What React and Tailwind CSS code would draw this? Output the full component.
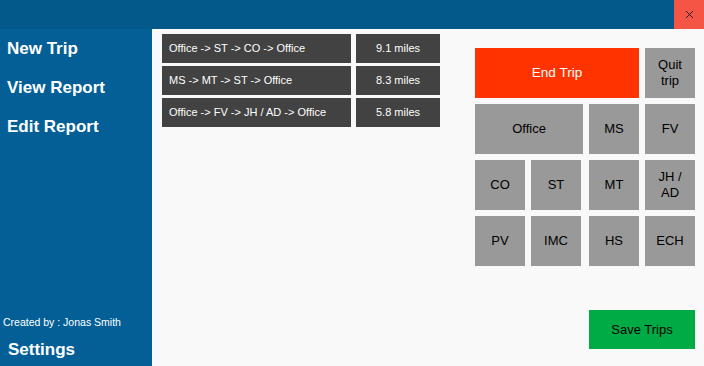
import React from "react";

const ROUTES = [
  { path: "Office -> ST -> CO -> Office", miles: "9.1 miles" },
  { path: "MS -> MT -> ST -> Office", miles: "8.3 miles" },
  { path: "Office -> FV -> JH / AD -> Office", miles: "5.8 miles" },
];

const GrayBtn = ({ children, className = "w-[50px]" }) => (
  <button
    className={`${className} h-[50px] bg-[#999999] text-black text-[13px] leading-[16px] flex items-center justify-center text-center`}
  >
    {children}
  </button>
);

const App = () => {
  return (
    <div
      className="w-[704px] h-[366px] flex flex-col bg-[#f9f9f9] overflow-hidden"
      style={{ fontFamily: '"Liberation Sans", Arial, sans-serif' }}
    >
      {/* title bar */}
      <div className="h-[29px] bg-[#04598b] flex justify-end shrink-0">
        <button className="w-[30px] h-[29px] bg-[#f55545] flex items-center justify-center">
          <svg width="9" height="9" viewBox="0 0 9 9">
            <path d="M1 1 L8 8 M8 1 L1 8" stroke="#222" strokeWidth="1" />
          </svg>
        </button>
      </div>

      <div className="flex flex-1 min-h-0">
        {/* sidebar */}
        <div className="w-[152px] bg-[#045f97] flex flex-col text-white shrink-0">
          {["New Trip", "View Report", "Edit Report"].map((item) => (
            <div
              key={item}
              className="h-[39px] flex items-center pl-[7px] text-[17px] font-bold"
            >
              {item}
            </div>
          ))}
          <div className="mt-auto mb-[4px] pl-[3px] text-[10.5px] leading-[13px]">
            Created by : Jonas Smith
          </div>
          <div className="h-[33px] flex items-center pl-[8px] text-[17px] font-bold">
            Settings
          </div>
        </div>

        {/* main */}
        <div className="flex-1 flex pl-[10px] pr-[9px] pt-[5px]">
          {/* routes */}
          <div className="flex flex-col gap-[3px] w-[278px]">
            {ROUTES.map((r) => (
              <div key={r.path} className="flex gap-[5px] h-[29px]">
                <div className="w-[189px] bg-[#424242] text-white text-[11px] flex items-center pl-[7px]">
                  {r.path}
                </div>
                <div className="w-[84px] bg-[#424242] text-white text-[11px] flex items-center justify-center">
                  {r.miles}
                </div>
              </div>
            ))}
          </div>

          {/* buttons */}
          <div className="ml-auto w-[220px] flex flex-col pt-[14px]">
            <div className="flex flex-col gap-[6px]">
              <div className="flex gap-[6px]">
                <button className="w-[164px] h-[50px] bg-[#ff3300] text-white text-[13.5px]">
                  End Trip
                </button>
                <GrayBtn>
                  Quit
                  <br />
                  trip
                </GrayBtn>
              </div>
              <div className="flex gap-[6px]">
                <GrayBtn className="w-[108px]">Office</GrayBtn>
                <GrayBtn>MS</GrayBtn>
                <GrayBtn>FV</GrayBtn>
              </div>
              <div className="flex">
                <GrayBtn>CO</GrayBtn>
                <div className="w-[6px]" />
                <GrayBtn>ST</GrayBtn>
                <div className="w-[8px]" />
                <GrayBtn>MT</GrayBtn>
                <div className="w-[6px]" />
                <GrayBtn>
                  JH /
                  <br />
                  AD
                </GrayBtn>
              </div>
              <div className="flex">
                <GrayBtn>PV</GrayBtn>
                <div className="w-[6px]" />
                <GrayBtn>IMC</GrayBtn>
                <div className="w-[8px]" />
                <GrayBtn>HS</GrayBtn>
                <div className="w-[6px]" />
                <GrayBtn>ECH</GrayBtn>
              </div>
            </div>
            <div className="flex justify-end mt-[44px]">
              <button className="w-[106px] h-[39px] bg-[#00ab45] text-black text-[13px]">
                Save Trips
              </button>
            </div>
          </div>
        </div>
      </div>
    </div>
  );
};

export default App;
